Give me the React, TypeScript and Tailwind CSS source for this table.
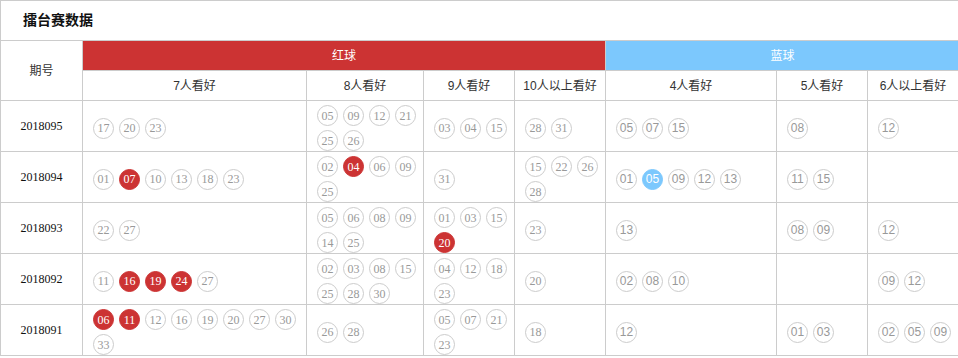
import React from "react"

type Cell = { n: string; hit?: boolean }[]

interface IRow {
  period: string
  red: Cell[]
  blue: Cell[]
}

// 把 "07*" 这种写法转成球
const b = (s: string): Cell =>
  s
    .split(" ")
    .filter(Boolean)
    .map((x) => ({ n: x.replace("*", ""), hit: x.endsWith("*") }))

const rows: IRow[] = [
  {
    period: "2018095",
    red: [b("17 20 23"), b("05 09 12 21 25 26"), b("03 04 15"), b("28 31")],
    blue: [b("05 07 15"), b("08"), b("12")],
  },
  {
    period: "2018094",
    red: [b("01 07* 10 13 18 23"), b("02 04* 06 09 25"), b("31"), b("15 22 26 28")],
    blue: [b("01 05* 09 12 13"), b("11 15"), b("")],
  },
  {
    period: "2018093",
    red: [b("22 27"), b("05 06 08 09 14 25"), b("01 03 15 20*"), b("23")],
    blue: [b("13"), b("08 09"), b("12")],
  },
  {
    period: "2018092",
    red: [b("11 16* 19* 24* 27"), b("02 03 08 15 25 28 30"), b("04 12 18 23"), b("20")],
    blue: [b("02 08 10"), b(""), b("09 12")],
  },
  {
    period: "2018091",
    red: [b("06* 11* 12 16 19 20 27 30 33"), b("26 28"), b("05 07 21 23"), b("18")],
    blue: [b("12"), b("01 03"), b("02 05 09")],
  },
]

const cjk = "font-['Liberation_Sans','Noto_Sans_CJK_SC',sans-serif]"

function RedBall({ n, hit }: { n: string; hit?: boolean }) {
  return (
    <span
      className={
        hit
          ? "w-[21px] h-[21px] mt-[4px] mr-[5px] rounded-full bg-[#cc3333] border border-[#cc3333] text-white flex items-center justify-center text-[12px] font-['Liberation_Serif',serif] leading-none"
          : "w-[21px] h-[21px] mt-[4px] mr-[5px] rounded-full border border-[#cccccc] text-[#999999] flex items-center justify-center text-[12px] font-['Liberation_Serif',serif] leading-none"
      }
    >
      {n}
    </span>
  )
}

function BlueBall({ n, hit }: { n: string; hit?: boolean }) {
  return (
    <span
      className={
        hit
          ? "w-[21px] h-[21px] mt-[4px] mr-[5px] rounded-full bg-[#7cc8fd] border border-[#7cc8fd] text-white flex items-center justify-center text-[12px] font-['Liberation_Sans',sans-serif] leading-none"
          : "w-[21px] h-[21px] mt-[4px] mr-[5px] rounded-full border border-[#cccccc] text-[#999999] flex items-center justify-center text-[12px] font-['Liberation_Sans',sans-serif] leading-none"
      }
    >
      {n}
    </span>
  )
}

const redHeads = ["7", "8", "9", "10"]
const redTails = ["人看好", "人看好", "人看好", "人以上看好"]
const blueHeads = ["4", "5", "6"]
const blueTails = ["人看好", "人看好", "人以上看好"]

export default function App() {
  return (
    <div className="w-[958px] overflow-hidden bg-white">
      <div className={`w-[959px] border-t border-l border-[#cccccc] ${cjk}`}>
        {/* 标题 */}
        <div className="h-[40px] pl-[22px] flex items-center border-b border-[#cccccc] text-[14px] font-bold text-[#111111]">
          擂台赛数据
        </div>

        <div className="grid grid-cols-[82px_224px_117px_91px_91px_171px_91px_91px]">
          {/* 表头 */}
          <div className="row-span-2 flex items-center justify-center border-r border-b border-[#cccccc] text-[12px] text-[#333333]">
            期号
          </div>
          <div className="col-span-4 h-[30px] flex items-center justify-center bg-[#cc3333] text-white text-[12px] border-r border-b border-[#cccccc]">
            红球
          </div>
          <div className="col-span-3 h-[30px] flex items-center justify-center bg-[#7cc8fd] text-white text-[12px] border-b border-[#cccccc]">
            蓝球
          </div>
          {redHeads.map((h, i) => (
            <div
              key={"r" + h}
              className="h-[30px] flex items-center justify-center border-r border-b border-[#cccccc] text-[12px] text-[#333333]"
            >
              {h}
              {redTails[i]}
            </div>
          ))}
          {blueHeads.map((h, i) => (
            <div
              key={"b" + h}
              className="h-[30px] flex items-center justify-center border-r border-b border-[#cccccc] text-[12px] text-[#333333]"
            >
              {h}
              {blueTails[i]}
            </div>
          ))}

          {/* 数据 */}
          {rows.map((row) => (
            <React.Fragment key={row.period}>
              <div className="h-[51px] flex items-center justify-center border-r border-b border-[#cccccc] text-[12px] text-[#111111] font-['Liberation_Serif',serif]">
                {row.period}
              </div>
              {row.red.map((cell, i) => (
                <div
                  key={"r" + i}
                  className="h-[51px] pl-[10px] flex flex-wrap content-center border-r border-b border-[#cccccc]"
                >
                  {cell.map((ball) => (
                    <RedBall key={ball.n} n={ball.n} hit={ball.hit} />
                  ))}
                </div>
              ))}
              {row.blue.map((cell, i) => (
                <div
                  key={"b" + i}
                  className="h-[51px] pl-[10px] flex flex-wrap content-center border-r border-b border-[#cccccc]"
                >
                  {cell.map((ball) => (
                    <BlueBall key={ball.n} n={ball.n} hit={ball.hit} />
                  ))}
                </div>
              ))}
            </React.Fragment>
          ))}
        </div>
      </div>
    </div>
  )
}
